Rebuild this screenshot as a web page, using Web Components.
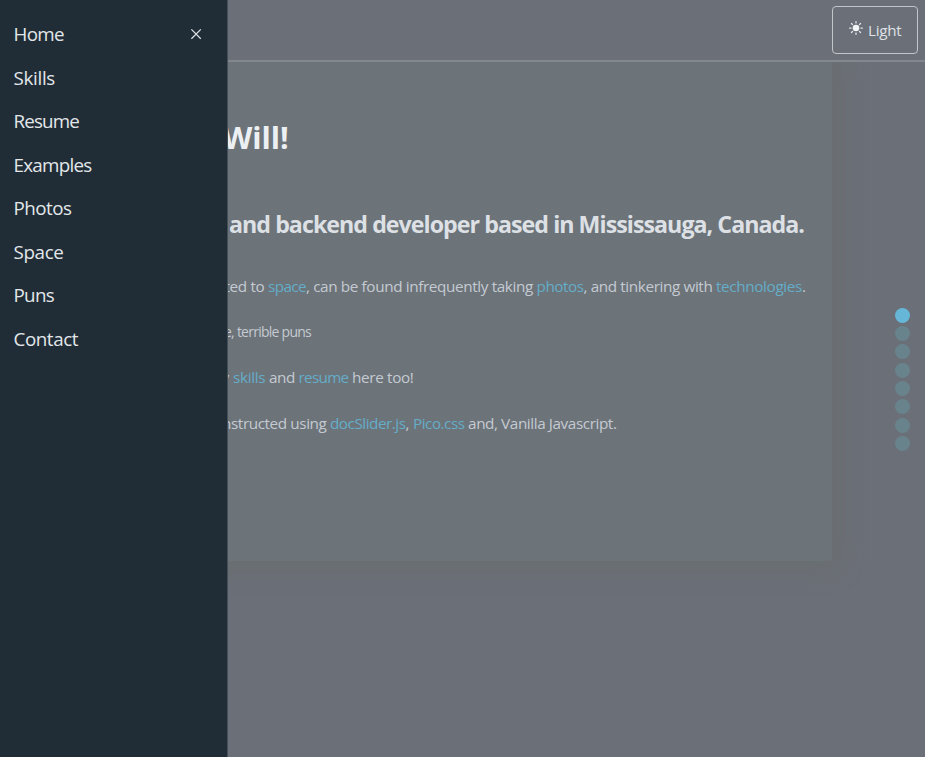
<!DOCTYPE html>
<html lang="en">
<head>
<meta charset="utf-8">
<title>Will</title>
<style>
body{margin:0;background:#6b6f77;font-family:"Open Sans","Noto Sans",sans-serif}
</style>
</head>
<body>
<site-page></site-page>
<script>
const define=(name,html,ready)=>customElements.define(name,class extends HTMLElement{
  connectedCallback(){
    if(this.shadowRoot)return;
    const t=document.createElement('template');
    t.innerHTML=html;
    this.attachShadow({mode:'open'}).append(t.content.cloneNode(true));
    if(ready)ready(this);
  }
});

/* A run of text whose tracking is adjusted to fill the width in "w". */
define('text-run',`<style>
:host{display:block;flex:none;white-space:pre}
:host([link]){color:#65adc8}
span{display:inline-block;white-space:pre}
</style><span><slot></slot></span>`,el=>{
  const w=parseFloat(el.getAttribute('w'));
  const s=el.shadowRoot.querySelector('span');
  el.style.width=w+'px';
  s.style.letterSpacing=(w-s.getBoundingClientRect().width)/el.textContent.length+'px';
});

define('menu-item',`<style>
:host{display:flex;height:43.55px;align-items:center;font-size:18.8px;line-height:26px;color:#e3e7ea}
</style><slot></slot>`);

define('close-icon',`<style>
:host{display:block;width:12px;height:12px}svg{display:block}
</style><svg width="12" height="12" viewBox="0 0 12 12" fill="none" stroke="#dce1e5" stroke-width="1.25"><path d="M1.4 1.4l9.4 9.4M10.8 1.4l-9.4 9.4"/></svg>`);

define('side-menu',`<style>
:host{display:flex;box-sizing:border-box;width:228px;height:757px;flex:none;justify-content:space-between;background:#202d37;padding:12.4px 25.5px 0 13.5px;border-right:1px solid #42505a}
close-icon{margin-top:15.6px}
</style>
<nav>
<menu-item><text-run w="50.5">Home</text-run></menu-item>
<menu-item><text-run w="41.5">Skills</text-run></menu-item>
<menu-item><text-run w="65.5">Resume</text-run></menu-item>
<menu-item><text-run w="78">Examples</text-run></menu-item>
<menu-item><text-run w="58">Photos</text-run></menu-item>
<menu-item><text-run w="50">Space</text-run></menu-item>
<menu-item><text-run w="40.5">Puns</text-run></menu-item>
<menu-item><text-run w="64.5">Contact</text-run></menu-item>
</nav><close-icon></close-icon>`);

define('theme-button',`<style>
:host{display:flex;box-sizing:border-box;width:86px;height:48px;border:1px solid #c2c5c9;border-radius:4px;padding:0 0 0 16px;color:#dfe2e6;font-size:15.2px;line-height:22px}
svg{display:block;margin-top:14px;flex:none}
text-run{margin:12px 0 0 5px}
</style><svg width="14" height="14" viewBox="0 0 14 14" stroke="#e1e4e7" stroke-width="1.25" stroke-linecap="round"><circle cx="7" cy="7" r="3.3" fill="#f3f5f6" stroke="none"/><path d="M7 .6v1.5M7 11.9v1.5M.6 7h1.5M11.9 7h1.5M2.5 2.5l1 1M10.5 10.5l1 1M2.5 11.5l1-1M10.5 3.5l1-1"/></svg><text-run w="33.5">Light</text-run>`);

define('top-bar',`<style>
:host{display:flex;position:relative;z-index:1;box-sizing:border-box;height:62px;justify-content:flex-end;padding:6px 7px 0 0;background:#6b6f77;border-bottom:2px solid #83878e}
</style><theme-button></theme-button>`);

define('text-row',`<style>
:host{display:flex;justify-content:flex-start}
</style><slot></slot>`);

define('intro-card',`<style>
:host{display:block;box-sizing:border-box;width:644px;height:499px;margin-left:-40px;padding-top:55px;background:#6c7379;box-shadow:0 0 24px 4px #696f6e;border-radius:0 0 2px 2px;color:#c5cad2;font-size:15.3px;line-height:24px}
text-row{height:24px;margin-bottom:21.6px}
.h1{height:42px;font-size:30.4px;line-height:42px;font-weight:700;color:#edf0f3;margin:0 0 49px 35px}
.h2{height:32px;font-size:23.2px;line-height:32px;font-weight:700;color:#dde1e5;margin:0 0 34px 41px}
.r1{margin-left:36.5px}.r2{margin-left:36px;font-size:14px}.r3{margin-left:33.5px}.r4{margin-left:34px}
</style>
<text-row class="h1"><text-run w="65.5">Will!</text-run></text-row>
<text-row class="h2"><text-run w="575">and backend developer based in Mississauga, Canada.</text-run></text-row>
<text-row class="r1"><text-run w="43.5">ted to </text-run><text-run link w="38">space</text-run><text-run w="230.5">, can be found infrequently taking </text-run><text-run link w="47">photos</text-run><text-run w="132.5">, and tinkering with </text-run><text-run link w="86">technologies</text-run><text-run w="4">.</text-run></text-row>
<text-row class="r2"><text-run w="87">e, terrible puns</text-run></text-row>
<text-row class="r3"><text-run w="11.5">y </text-run><text-run link w="36">skills </text-run><text-run w="29.5">and </text-run><text-run link w="50">resume</text-run><text-run w="65"> here too!</text-run></text-row>
<text-row class="r4"><text-run w="108">nstructed using </text-run><text-run link w="75.5">docSlider.js</text-run><text-run w="7.5">, </text-run><text-run link w="51.5">Pico.css</text-run><text-run w="152"> and, Vanilla Javascript.</text-run></text-row>`);

define('page-dots',`<style>
:host{display:flex;flex-direction:column;gap:3.35px;margin:245.5px 15.5px 0 0}
i{display:block;width:15px;height:15px;border-radius:50%;background:#69838d}
i:first-of-type{background:#66b7d7}
</style><i></i><i></i><i></i><i></i><i></i><i></i><i></i><i></i>`);

define('site-page',`<style>
:host{display:flex;width:925px;height:757px;overflow:hidden}
main{width:697px;height:757px;overflow:hidden}
section{display:flex;align-items:flex-start;justify-content:space-between}
intro-card{flex:none}
</style><side-menu></side-menu><main><top-bar></top-bar><section><intro-card></intro-card><page-dots></page-dots></section></main>`);
</script>
</body>
</html>
